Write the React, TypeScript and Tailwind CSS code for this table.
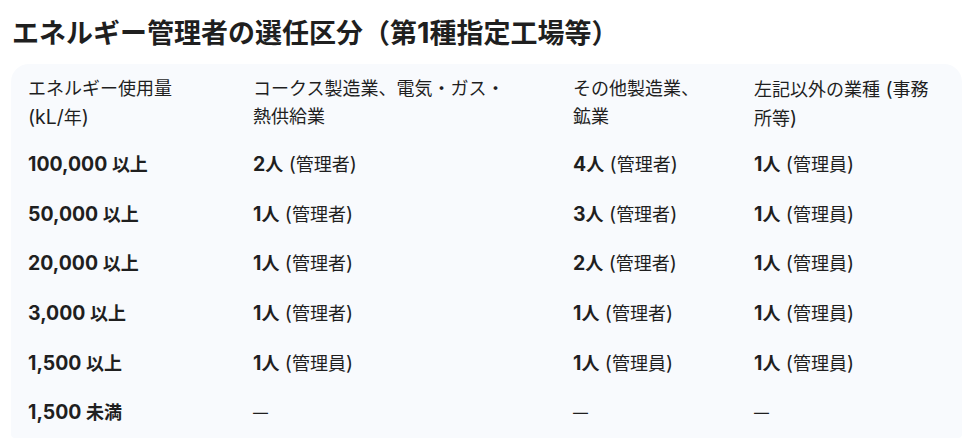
const rows: { range: string; cells: [string, string][] }[] = [
  { range: '100,000 以上', cells: [['2人', '(管理者)'], ['4人', '(管理者)'], ['1人', '(管理員)']] },
  { range: '50,000 以上', cells: [['1人', '(管理者)'], ['3人', '(管理者)'], ['1人', '(管理員)']] },
  { range: '20,000 以上', cells: [['1人', '(管理者)'], ['2人', '(管理者)'], ['1人', '(管理員)']] },
  { range: '3,000 以上', cells: [['1人', '(管理者)'], ['1人', '(管理者)'], ['1人', '(管理員)']] },
  { range: '1,500 以上', cells: [['1人', '(管理員)'], ['1人', '(管理員)'], ['1人', '(管理員)']] },
  { range: '1,500 未満', cells: [['', ''], ['', ''], ['', '']] },
]

const headers = [
  'エネルギー使用量 (kL/年)',
  'コークス製造業、電気・ガス・熱供給業',
  'その他製造業、鉱業',
  '左記以外の業種 (事務所等)',
]

// padding per column so the header wraps like the original
const pads = ['pr-[40px]', 'pr-[56px]', 'pr-[45px]', 'pr-0']

// latin runs are set a bit larger than the japanese ones, like the original font mix
function Mixed({ text }: { text: string }) {
  const parts = text.split(/([\u0000-\u00ff]+)/)
  return (
    <>
      {parts.map((p, i) =>
        i % 2 === 1 ? (
          <span key={i} className="text-[1.08em]">
            {p}
          </span>
        ) : (
          p
        )
      )}
    </>
  )
}

export default function App() {
  return (
    <div
      className="w-[979px] h-[440px] overflow-hidden bg-white pl-[11px] text-[#1f1f1f]"
      style={{ fontFamily: 'Inter, "Noto Sans CJK JP", sans-serif' }}
    >
      <h1 className="h-[51px] pt-[15px] pl-[1px] text-[27px] leading-[36px] font-bold">
        <Mixed text="エネルギー管理者の選任区分（第1種指定工場等）" />
      </h1>

      <div className="mt-[13px] w-[951px] rounded-t-[18px] rounded-b-[4px] bg-[#f8fafd] pl-[17px] pr-[26px] pt-[11px]">
        <div className="grid grid-cols-[225px_320px_181px_1fr] text-[18px]">
          {headers.map((h, i) => (
            <div key={h} className={`${pads[i]} h-[65px] leading-[28px]`}>
              {i === 0 ? (
                <>
                  エネルギー使用量{' '}
                  <span className="whitespace-nowrap">
                    <Mixed text="(kL/年)" />
                  </span>
                </>
              ) : (
                <Mixed text={h} />
              )}
            </div>
          ))}

          {rows.map((r) => (
            <div key={r.range} className="contents">
              <div className="h-[49.6px] flex items-center font-bold">
                <span>
                  <Mixed text={r.range} />
                </span>
              </div>
              {r.cells.map(([n, role], j) => (
                <div key={j} className="h-[49.6px] flex items-center">
                  {n ? (
                    <span>
                      <span className="font-bold">
                        <Mixed text={n} />
                      </span>
                      <Mixed text={' ' + role} />
                    </span>
                  ) : (
                    <span className="text-[15px]">—</span>
                  )}
                </div>
              ))}
            </div>
          ))}
        </div>
      </div>
    </div>
  )
}
